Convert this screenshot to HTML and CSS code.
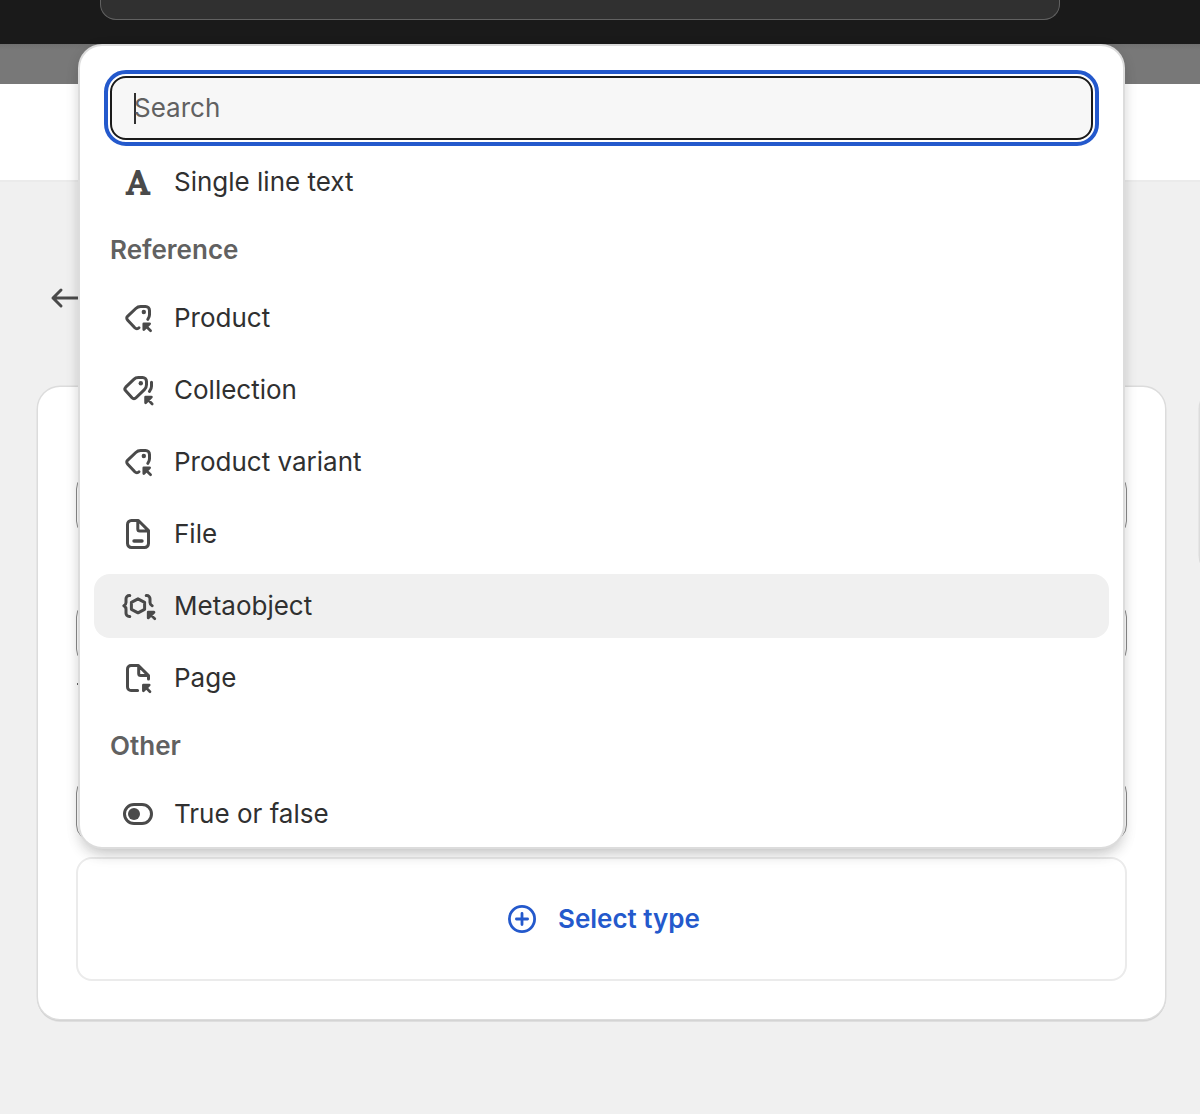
FILE: index.html
```
<!DOCTYPE html>
<html lang="en">
<head>
<meta charset="UTF-8">
<meta name="viewport" content="width=device-width, initial-scale=1.0">
<title>Add field</title>
<link rel="stylesheet" href="styles.css">
</head>
<body>
<div class="topbar">
    <div class="topbar-search"></div>
</div>
<div class="strip"></div>
<div class="page-header"></div>

<main class="page">
    <div class="back">
        <svg class="icon" viewBox="0 0 20 20"><path d="M16.5 10H4M8 6L4 10L8 14"/></svg>
    </div>
    <div class="columns">
        <section class="card">
            <div class="field"></div>
            <div class="field"></div>
            <div class="hint"></div>
            <div class="field field-last"></div>
            <div class="select-type">
                <svg class="icon" viewBox="0 0 20 20"><circle cx="10" cy="10" r="6.3"/><path d="M10 7.2V12.8M7.2 10H12.8"/></svg>
                <span>Select type</span>
            </div>
        </section>
        <aside class="card side-card"></aside>
    </div>
</main>

<div class="popover">
    <div class="search"><span class="caret"></span><span>Search</span></div>
    <div class="list">
        <div class="item">
            <span class="icon letter">A</span>
            <span>Single line text</span>
        </div>
        <h3>Reference</h3>
        <div class="item">
            <svg class="icon" viewBox="0 0 20 20">
                <path d="M14.9 10.7C15.4 10 15.75 9.3 15.75 8.4V6.2A1.95 1.95 0 0 0 13.8 4.25H11.4A3.5 3.5 0 0 0 8.9 5.25L4.75 9.15A1.25 1.25 0 0 0 4.75 10.95L8.4 14.9A1.5 1.5 0 0 0 10.5 14.9"/>
                <circle class="dot" cx="12.9" cy="7" r="1.1"/>
                <path class="pointer" d="M15.8 12.9H12.9V15.8ZM13 13.1L16.3 16.4"/>
            </svg>
            <span>Product</span>
        </div>
        <div class="item">
            <svg class="icon" viewBox="0 0 20 20">
                <path d="M12.3 3.75H10.2A3.2 3.2 0 0 0 7.9 4.7L3.85 8.6A1.3 1.3 0 0 0 3.85 10.4L7 13.9A1.4 1.4 0 0 0 9 13.9L13.2 9.8A3.4 3.4 0 0 0 14.25 7.4V5.7A1.95 1.95 0 0 0 12.3 3.75ZM16.75 6.1V8.1C16.75 9.2 16.4 9.9 15.7 10.7"/>
                <circle class="dot" cx="11.4" cy="6.6" r="1.1"/>
                <path class="pointer" d="M16.7 13.5H13.8V16.4ZM13.9 13.7L17.1 17"/>
            </svg>
            <span>Collection</span>
        </div>
        <div class="item">
            <svg class="icon" viewBox="0 0 20 20">
                <path d="M14.9 10.7C15.4 10 15.75 9.3 15.75 8.4V6.2A1.95 1.95 0 0 0 13.8 4.25H11.4A3.5 3.5 0 0 0 8.9 5.25L4.75 9.15A1.25 1.25 0 0 0 4.75 10.95L8.4 14.9A1.5 1.5 0 0 0 10.5 14.9"/>
                <circle class="dot" cx="12.9" cy="7" r="1.1"/>
                <path class="pointer" d="M15.8 12.9H12.9V15.8ZM13 13.1L16.3 16.4"/>
            </svg>
            <span>Product variant</span>
        </div>
        <div class="item">
            <svg class="icon" viewBox="0 0 20 20">
                <path d="M10 3.25H6.7A1.95 1.95 0 0 0 4.75 5.2V14.8A1.95 1.95 0 0 0 6.7 16.75H13.3A1.95 1.95 0 0 0 15.25 14.8V8.3L10.2 3.25H9.9V7.5A1 1 0 0 0 10.9 8.5H15.2"/>
                <path class="dash" d="M8 13.5H12"/>
            </svg>
            <span>File</span>
        </div>
        <div class="item active">
            <svg class="icon" viewBox="0 0 20 20">
                <path d="M5.9 4.75H5.6A1.6 1.6 0 0 0 4 6.35V8.2C4 9 3.6 9.5 2.9 9.9C3.6 10.3 4 10.8 4 11.6V13.65A1.6 1.6 0 0 0 5.6 15.25H5.9M14.1 4.75H14.4A1.6 1.6 0 0 1 16 6.35V8.2C16 9 16.4 9.5 17.1 9.9M10 6.4L13.3 8.15V11.65L10 13.4L6.7 11.65V8.15Z"/>
                <path class="pointer" d="M18 13.1H15.1V16ZM15.2 13.3L18.4 16.4"/>
            </svg>
            <span>Metaobject</span>
        </div>
        <div class="item">
            <svg class="icon" viewBox="0 0 20 20">
                <path d="M9.8 16.25H6.5A1.75 1.75 0 0 1 4.75 14.5V5.5A1.75 1.75 0 0 1 6.5 3.75H10.2L15.25 8.8V10.5M10.35 4V7.75A1 1 0 0 0 11.35 8.75H15"/>
                <path class="pointer" d="M15.6 13.5H12.7V16.4ZM12.9 13.7L16 16.9"/>
            </svg>
            <span>Page</span>
        </div>
        <h3>Other</h3>
        <div class="item">
            <svg class="icon" viewBox="0 0 20 20">
                <rect x="3.25" y="5.25" width="13.5" height="9.5" rx="4.75"/>
                <circle class="dot" cx="8" cy="10" r="3"/>
            </svg>
            <span>True or false</span>
        </div>
    </div>
</div>
</body>
</html>
```
FILE: styles.css
```
* {
    box-sizing: border-box;
}
body {
    margin: 0;
    height: 1114px;
    position: relative;
    overflow: hidden;
    background-color: #f0f0f0;
    color: #303030;
    font-family: Inter, "Liberation Sans", sans-serif;
    font-size: 26px;
    line-height: 40px;
}
.topbar {
    height: 44px;
    padding: 0 140px 0 100px;
    background-color: #1a1a1a;
}
.topbar-search {
    height: 20px;
    border: 1px solid #616161;
    border-top: 0;
    border-radius: 0 0 16px 16px;
    background-color: #303030;
}
.strip {
    height: 40px;
    background: linear-gradient(#707070, #787878 6px);
}
.page-header {
    height: 98px;
    background-color: #fff;
    border-bottom: 2px solid #ebebeb;
}

/* Page behind the menu */
.page {
    padding: 96px 0 0 38px;
    overflow: hidden;
}
.back {
    height: 109px;
    padding-left: 7px;
}
.columns {
    display: grid;
    grid-template-columns: 1127px 1fr;
    gap: 35px;
    align-items: start;
    padding-bottom: 40px;
}
.card {
    height: 632px;
    padding: 86px 38px 0;
    background-color: #fff;
    border-radius: 22px;
    box-shadow: 0 0 0 1.5px #dcdcdc, 0 1px 0 1px #ccc, 0 3px 0 #dedede;
}
.side-card {
    height: 190px;
    padding: 0;
    width: 300px;
}
.field {
    height: 64px;
    margin-bottom: 64px;
    border: 1px solid #8a8a8a;
    border-radius: 16px;
}
.field + .field {
    margin-bottom: 18px;
}
.hint {
    width: 1px;
    height: 2px;
    margin: 0 0 92px 1px;
    background-color: #616161;
}
.field-last {
    margin-bottom: 16px;
}
.select-type {
    display: flex;
    align-items: center;
    justify-content: center;
    gap: 16px;
    height: 124px;
    padding-right: 1px;
    border: 2px solid #ebebeb;
    border-radius: 16px;
    color: #2459cc;
    font-weight: 600;
}

/* Icons */
.icon {
    flex: none;
    width: 40px;
    height: 40px;
    color: #4a4a4a;
    fill: none;
    stroke: currentColor;
    stroke-width: 1.5;
    stroke-linecap: round;
    stroke-linejoin: round;
}
.dot {
    fill: currentColor;
    stroke: none;
}
.pointer {
    fill: currentColor;
    stroke-width: 1.35;
}
.dash {
    stroke-width: 1.7;
}
.select-type .icon {
    color: #2459cc;
    stroke-width: 1.4;
}
/* Thickened regular weight keeps the thin strokes of the letter solid */
.letter {
    font-family: "DejaVu Serif", serif;
    font-size: 31px;
    line-height: 43px;
    text-align: center;
    -webkit-text-stroke: 1.8px #4a4a4a;
}

/* Field type menu */
.popover {
    position: absolute;
    top: 46px;
    left: 80px;
    width: 1043px;
    height: 801px;
    padding: 30px 14px 0;
    overflow: hidden;
    background-color: #fff;
    border-radius: 22px;
    box-shadow: 0 0 0 2px #dcdcdc, 0 8px 16px -4px rgba(26, 26, 26, 0.26), 0 4px 16px rgba(26, 26, 26, 0.1);
}
.search {
    display: flex;
    align-items: center;
    height: 64px;
    margin: 0 16px 10px;
    padding-left: 22px;
    background-color: #f7f7f7;
    border: 2px solid #1a1a1a;
    border-radius: 16px;
    outline: 4px solid #2459cc;
    outline-offset: 2px;
    color: #616161;
}
.caret {
    width: 2px;
    height: 31px;
    margin-right: -2px;
    background-color: #303030;
}
.item {
    display: flex;
    align-items: center;
    gap: 16px;
    height: 64px;
    margin-bottom: 8px;
    padding: 0 24px;
    border-radius: 16px;
}
.item.active {
    background-color: #f0f0f0;
}
h3 {
    margin: -8px 0 0;
    padding: 16px;
    color: #616161;
    font-size: 26px;
    font-weight: 600;
    line-height: 40px;
}
```
